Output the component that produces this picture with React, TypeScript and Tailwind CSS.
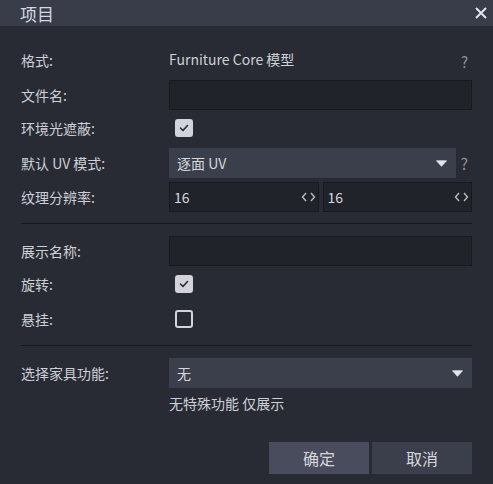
import React from "react";

const font = { fontFamily: '"Noto Sans CJK SC", "Noto Sans", sans-serif' };

function Label({ children }: { children: React.ReactNode }) {
  return (
    <div className="w-[148px] shrink-0 text-[14px] text-[#cdd0d6] leading-none">{children}</div>
  );
}

function Checkbox({ checked }: { checked: boolean }) {
  return checked ? (
    <div className="ml-[6px] w-[18px] h-[18px] rounded-[3px] bg-[#d3d3db] flex items-center justify-center">
      <svg width="10" height="8" viewBox="0 0 10 8">
        <path d="M1.5 4 L4 6.5 L8.5 1.5" fill="none" stroke="#2a2d36" strokeWidth="1.6" strokeLinecap="round" strokeLinejoin="round" />
      </svg>
    </div>
  ) : (
    <div className="ml-[6px] w-[18px] h-[18px] rounded-[3px] border-2 border-[#d3d3db]" />
  );
}

function Arrows() {
  return (
    <svg width="15" height="10" viewBox="0 0 15 10" className="shrink-0">
      <path d="M5 1 L1.5 5 L5 9" fill="none" stroke="#b9bcc4" strokeWidth="1.4" />
      <path d="M10 1 L13.5 5 L10 9" fill="none" stroke="#b9bcc4" strokeWidth="1.4" />
    </svg>
  );
}

function Caret() {
  return (
    <svg width="11" height="7" viewBox="0 0 11 7" className="shrink-0">
      <path d="M0.5 0.8 L10.5 0.8 L5.5 6.3 Z" fill="#e4e6ea" strokeLinejoin="round" stroke="#e4e6ea" strokeWidth="0.8" />
    </svg>
  );
}

export default function App() {
  return (
    <div style={font} className="w-[493px] h-[484px] bg-[#282b34] flex flex-col overflow-hidden">
      <div className="h-[26px] bg-[#393c49] flex items-center justify-between pl-[20px] pr-[6px]">
        <span className="text-[17px] text-[#d4d8e0] leading-none">项目</span>
        <svg width="12" height="12" viewBox="0 0 12 12">
          <path d="M1 1 L11 11 M11 1 L1 11" stroke="#e2e5ea" strokeWidth="2" />
        </svg>
      </div>
      <div className="flex flex-col px-[21px]">
        <div className="mt-[19px] h-[30px] flex items-center">
          <Label>格式:</Label>
          <span className="text-[14px] text-[#cdd0d6] leading-none -mt-[3px]">Furniture Core 模型</span>
          <span className="ml-auto mr-[4px] text-[15px] text-[#8d9099] leading-none mt-[3px]">?</span>
        </div>
        <div className="mt-[5px] h-[30px] flex items-center">
          <Label>文件名:</Label>
          <div className="flex-1 h-[30px] bg-[#20232a] border border-[#17191e]" />
        </div>
        <div className="mt-[3px] h-[30px] flex items-center">
          <Label>环境光遮蔽:</Label>
          <Checkbox checked />
        </div>
        <div className="mt-[5px] h-[30px] flex items-center">
          <Label>默认 UV 模式:</Label>
          <div className="flex-1 h-[30px] bg-[#3b3e4b] flex items-center pl-[8px] pr-[9px]">
            <span className="text-[14px] text-[#d6d8dd] leading-none">逐面 UV</span>
            <span className="ml-auto"><Caret /></span>
          </div>
          <span className="w-[16px] text-right pr-[4px] text-[16px] text-[#8d9099] leading-none">?</span>
        </div>
        <div className="mt-[4px] h-[30px] flex items-center">
          <Label>纹理分辨率:</Label>
          <div className="flex-1 flex gap-[4px]">
            <div className="flex-1 h-[30px] bg-[#20232a] border border-[#17191e] flex items-center pl-[4px] pr-[2px]">
              <span className="text-[14px] text-[#d6d8dd] leading-none">16</span>
              <span className="ml-auto"><Arrows /></span>
            </div>
            <div className="flex-1 h-[30px] bg-[#20232a] border border-[#17191e] flex items-center pl-[4px] pr-[2px]">
              <span className="text-[14px] text-[#d6d8dd] leading-none">16</span>
              <span className="ml-auto"><Arrows /></span>
            </div>
          </div>
        </div>
        <div className="mt-[11px] h-px bg-[#17181d]" />
        <div className="mt-[12px] h-[30px] flex items-center">
          <Label>展示名称:</Label>
          <div className="flex-1 h-[30px] bg-[#20232a] border border-[#17191e]" />
        </div>
        <div className="mt-[3px] h-[30px] flex items-center">
          <Label>旋转:</Label>
          <Checkbox checked />
        </div>
        <div className="mt-[5px] h-[30px] flex items-center">
          <Label>悬挂:</Label>
          <Checkbox checked={false} />
        </div>
        <div className="mt-[11px] h-px bg-[#17181d]" />
        <div className="mt-[12px] h-[30px] flex items-center">
          <Label>选择家具功能:</Label>
          <div className="flex-1 h-[30px] bg-[#3b3e4b] flex items-center pl-[8px] pr-[9px]">
            <span className="text-[14px] text-[#d6d8dd] leading-none">无</span>
            <span className="ml-auto"><Caret /></span>
          </div>
        </div>
        <div className="mt-[5px] h-[20px] flex items-center pl-[148px]">
          <span className="text-[14px] text-[#cdd0d6] leading-none">无特殊功能 仅展示</span>
        </div>
        <div className="mt-[29px] flex justify-end gap-[3px]">
          <button className="w-[100px] h-[32px] bg-[#484c5c] text-[16px] text-[#d6d8dd] leading-none">确定</button>
          <button className="w-[100px] h-[32px] bg-[#3b3e4b] text-[16px] text-[#d6d8dd] leading-none">取消</button>
        </div>
      </div>
    </div>
  );
}
